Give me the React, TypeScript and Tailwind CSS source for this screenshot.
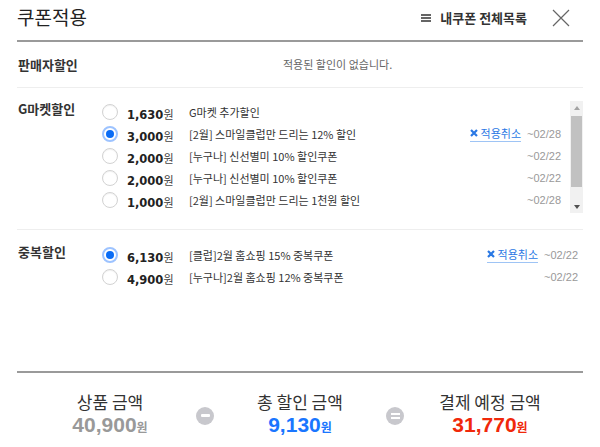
import React from 'react';

type Coupon = {
  amount: string;
  name: string;
  until: string;
  checked?: boolean;
};

const gmarketCoupons: Coupon[] = [
  { amount: '1,630', name: 'G마켓 추가할인', until: '' },
  { amount: '3,000', name: '[2월] 스마일클럽만 드리는 12% 할인', until: '~02/28', checked: true },
  { amount: '2,000', name: '[누구나] 신선별미 10% 할인쿠폰', until: '~02/22' },
  { amount: '2,000', name: '[누구나] 신선별미 10% 할인쿠폰', until: '~02/22' },
  { amount: '1,000', name: '[2월] 스마일클럽만 드리는 1천원 할인', until: '~02/28' },
];

const duplicateCoupons: Coupon[] = [
  { amount: '6,130', name: '[클럽]2월 홈쇼핑 15% 중복쿠폰', until: '~02/22', checked: true },
  { amount: '4,900', name: '[누구나]2월 홈쇼핑 12% 중복쿠폰', until: '~02/22' },
];

const Radio = ({ checked }: { checked?: boolean }) =>
  checked ? (
    <span className="flex h-[16px] w-[16px] shrink-0 items-center justify-center rounded-full border-2 border-[#9dc3ff] bg-white">
      <span className="h-[8px] w-[8px] rounded-full bg-[#0a6cf5]" />
    </span>
  ) : (
    <span className="h-[16px] w-[16px] shrink-0 rounded-full border border-[#d2d2d2] bg-white shadow-[inset_0_1px_1px_rgba(0,0,0,0.06)]" />
  );

const CancelLink = () => (
  <button className="flex items-center gap-[3px] border-b border-[#9ec4f5] pb-[1px] text-[11px] leading-[14px] text-[#2a78e4]">
    <svg width="8" height="8" viewBox="0 0 8 8">
      <path d="M1 1L7 7M7 1L1 7" stroke="#2a78e4" strokeWidth="2.2" />
    </svg>
    적용취소
  </button>
);

const CouponRow = ({ coupon }: { coupon: Coupon }) => (
  <div className="flex h-[22px] items-center">
    <Radio checked={coupon.checked} />
    <div className="ml-[9px] w-[62px] shrink-0 text-[#222]">
      <span className="font-['DejaVu_Sans',sans-serif] text-[11.5px] font-bold">{coupon.amount}</span>
      <span className="text-[11px] text-[#444]">원</span>
    </div>
    <div className="min-w-0 flex-1 truncate text-[11px] text-[#333]">{coupon.name}</div>
    {coupon.checked && <CancelLink />}
    <div className="ml-[6px] w-[34px] shrink-0 text-right font-['Liberation_Sans',sans-serif] text-[11px] text-[#999]">
      {coupon.until}
    </div>
  </div>
);

const Scrollbar = () => (
  <div className="ml-[4px] flex h-[112px] w-[13px] shrink-0 flex-col bg-[#f1f1f1]">
    <div className="flex h-[13px] items-center justify-center">
      <span className="h-0 w-0 border-x-[3px] border-b-[4px] border-x-transparent border-b-[#a3a3a3]" />
    </div>
    <div className="flex-1 px-[1px] pt-[2px]">
      <div className="h-[71px] bg-[#c1c1c1]" />
    </div>
    <div className="flex h-[13px] items-center justify-center">
      <span className="h-0 w-0 border-x-[3px] border-t-[4px] border-x-transparent border-t-[#505050]" />
    </div>
  </div>
);

const Amount = ({ label, value, color }: { label: string; value: string; color: string }) => (
  <div className="flex flex-col items-center">
    <div className="text-[17px] leading-[22px] text-[#333]">{label}</div>
    <div className={`flex items-baseline font-['Liberation_Sans',sans-serif] font-bold leading-[24px] ${color}`}>
      <span className="text-[21px]">{value}</span>
      <span className="font-['Noto_Sans_CJK_KR',sans-serif] text-[12px]">원</span>
    </div>
  </div>
);

const Operator = ({ kind }: { kind: 'minus' | 'equals' }) => (
  <div className="flex items-center justify-center pt-[1px]">
    <div className="flex h-[18px] w-[18px] flex-col items-center justify-center gap-[2px] rounded-full bg-[#c8c8cd]">
      {kind === 'minus' ? (
        <span className="h-[3px] w-[9px] rounded-[1px] bg-white" />
      ) : (
        <>
          <span className="h-[2px] w-[9px] bg-white" />
          <span className="h-[2px] w-[9px] bg-white" />
        </>
      )}
    </div>
  </div>
);

export default function App() {
  return (
    <div className="flex h-[447px] w-[600px] flex-col bg-white px-[17px] font-['Noto_Sans_CJK_KR',sans-serif]">
      {/* Header */}
      <div className="flex h-[42px] shrink-0 items-center justify-between border-b-2 border-[#9a9a9a] pb-[5px]">
        <h1 className="text-[19px] text-[#222]">쿠폰적용</h1>
        <div className="flex items-center">
          <button className="flex items-center gap-[9px] text-[13px] font-bold text-[#333]">
            <svg width="10" height="8" viewBox="0 0 10 8">
              <path d="M0 1H10M0 4H10M0 7H10" stroke="#333" strokeWidth="1.5" />
            </svg>
            내쿠폰 전체목록
          </button>
          <button className="ml-[25px] mr-[13px]">
            <svg width="18" height="18" viewBox="0 0 18 18">
              <path d="M1 1L17 17M17 1L1 17" stroke="#666" strokeWidth="1.2" />
            </svg>
          </button>
        </div>
      </div>

      {/* 판매자할인 */}
      <div className="flex h-[46px] shrink-0 items-center border-b border-[#eeeeee]">
        <div className="w-[85px] pl-[1px] text-[13px] font-bold text-[#333]">판매자할인</div>
        <div className="pl-[181px] text-[11px] text-[#666]">적용된 할인이 없습니다.</div>
      </div>

      {/* G마켓할인 */}
      <div className="flex shrink-0 border-b border-[#eeeeee] pb-[16px] pt-[13px]">
        <div className="w-[85px] shrink-0 pl-[1px] text-[13px] font-bold leading-[16px] text-[#333]">G마켓할인</div>
        <div className="min-w-0 flex-1 pr-[5px]">
          {gmarketCoupons.map((c, i) => (
            <CouponRow key={i} coupon={c} />
          ))}
        </div>
        <Scrollbar />
      </div>

      {/* 중복할인 */}
      <div className="flex shrink-0 pt-[14px]">
        <div className="w-[85px] shrink-0 pl-[1px] text-[13px] font-bold leading-[16px] text-[#333]">중복할인</div>
        <div className="min-w-0 flex-1 pr-[5px]">
          {duplicateCoupons.map((c, i) => (
            <CouponRow key={i} coupon={c} />
          ))}
        </div>
      </div>

      {/* Summary */}
      <div className="mt-auto h-[76px] shrink-0 border-t-2 border-[#9a9a9a] pt-[18px]">
        <div className="grid grid-cols-[152px_38px_152px_38px_152px] justify-center">
          <Amount label="상품 금액" value="40,900" color="text-[#999]" />
          <Operator kind="minus" />
          <Amount label="총 할인 금액" value="9,130" color="text-[#1a76ff]" />
          <Operator kind="equals" />
          <Amount label="결제 예정 금액" value="31,770" color="text-[#f0280a]" />
        </div>
      </div>
    </div>
  );
}
